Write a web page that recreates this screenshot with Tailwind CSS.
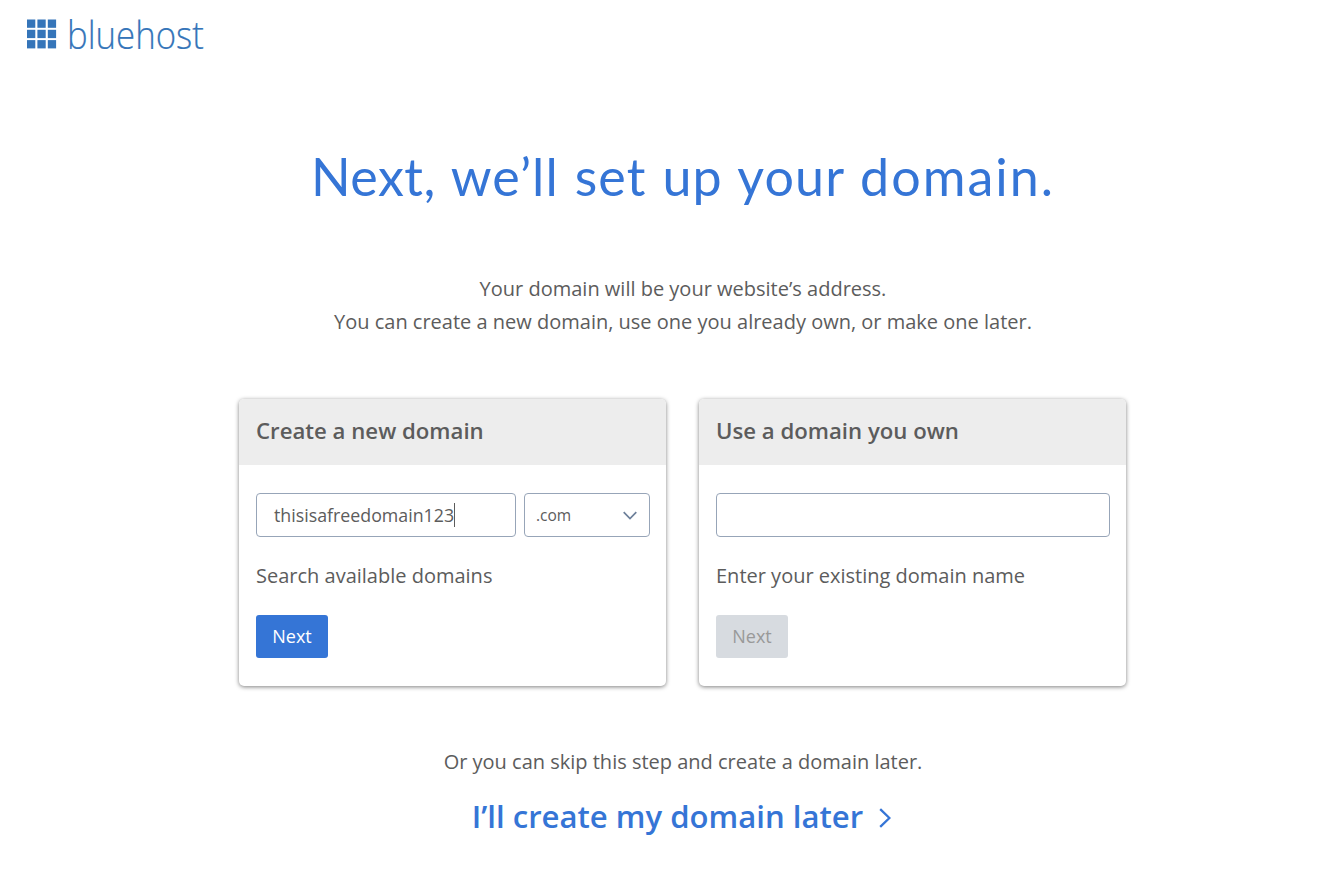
<!DOCTYPE html>
<html lang="en">
<head>
    <meta charset="UTF-8">
    <meta name="viewport" content="width=device-width, initial-scale=1.0">
    <title>Bluehost - Set up your domain</title>
    <script src="https://cdn.jsdelivr.net/npm/@tailwindcss/browser@4"></script>
</head>
<body class="bg-white font-['Open_Sans',sans-serif] text-[#5c5c5c] h-[889px] overflow-hidden">
    <!-- Logo -->
    <header class="flex items-start h-[72px] pl-[27px] pt-[19px]">
        <svg class="w-[30px] h-[30px] fill-[#3575b9]" viewBox="0 0 30 30">
            <rect x="0" y="0.5" width="8.3" height="8.3"/>
            <rect x="10.4" y="0.5" width="8.3" height="8.3"/>
            <rect x="20.8" y="0.5" width="8.3" height="8.3"/>
            <rect x="0" y="10.8" width="8.3" height="8.3"/>
            <rect x="10.4" y="10.8" width="8.3" height="8.3"/>
            <rect x="20.8" y="10.8" width="8.3" height="8.3"/>
            <rect x="0" y="21.1" width="8.3" height="8.3"/>
            <rect x="10.4" y="21.1" width="8.3" height="8.3"/>
            <rect x="20.8" y="21.1" width="8.3" height="8.3"/>
        </svg>
        <span class="ml-[10px] -mt-[7px] origin-left scale-x-[0.915] text-[38px] leading-[44px] font-light text-[#3575b9] [-webkit-text-stroke:0.2px_#3575b9]">bluehost</span>
    </header>

    <main class="w-[888px] ml-[239px] flex flex-col items-center">
        <h1 class="mt-[69px] h-[70px] font-['Lato',sans-serif] text-[52px] leading-[70px] tracking-[1.1px] [word-spacing:1.5px] text-[#3575d6] whitespace-nowrap"><span class="tracking-[0.5px]">Next,</span> we’ll set up your <span class="tracking-[2px]">domain.</span></h1>

        <p class="mt-[61px] text-center text-[20px] leading-[33px] whitespace-nowrap">
            Your domain will be your website’s address.<br>
            You can create a new domain, use one you already own, or make one later.
        </p>

        <div class="mt-[61px] w-[887px] self-start grid grid-cols-2 gap-[33px]">
            <!-- New domain -->
            <section class="h-[287px] rounded-[5px] overflow-hidden bg-white shadow-[0_1px_4px_rgba(0,0,0,0.5)]">
                <h2 class="h-[66px] px-[17px] bg-[#ededed] text-[22.2px] leading-[64px] font-semibold">Create a new domain</h2>
                <div class="pl-[17px] pr-[16.5px] pt-[28px]">
                    <div class="flex gap-2">
                        <div class="w-[260px] h-[44px] flex items-center pl-[17px] border border-[#97a5b8] rounded-[4px] text-[17.8px]">
                            <span>thisisafreedomain123</span><span class="w-px h-6 bg-[#5c5c5c]"></span>
                        </div>
                        <div class="flex-1 h-[44px] flex items-center justify-between pl-[11px] pr-[12px] border border-[#97a5b8] rounded-[4px] text-[15.5px]">
                            <span class="pt-px">.com</span>
                            <svg class="w-[14px] h-[9px] fill-none stroke-[#6e819b] stroke-[1.7]" viewBox="0 0 14 9"><path d="M0.7 1.2 7 7.5 13.3 1.2"/></svg>
                        </div>
                    </div>
                    <p class="mt-[24px] text-[20px] leading-[30px]">Search available domains</p>
                    <button class="mt-[24px] w-[72px] h-[43px] rounded-[3px] bg-[#3575d6] text-white text-[18px]">Next</button>
                </div>
            </section>

            <!-- Existing domain -->
            <section class="h-[287px] rounded-[5px] overflow-hidden bg-white shadow-[0_1px_4px_rgba(0,0,0,0.5)]">
                <h2 class="h-[66px] px-[17px] bg-[#ededed] text-[22.2px] leading-[64px] font-semibold">Use a domain you own</h2>
                <div class="pl-[17px] pr-[16.5px] pt-[28px]">
                    <div class="h-[44px] border border-[#97a5b8] rounded-[4px]"></div>
                    <p class="mt-[24px] text-[20px] leading-[30px]">Enter your existing domain name</p>
                    <button class="mt-[24px] w-[72px] h-[43px] rounded-[3px] bg-[#d7dbe0] text-[#999] text-[18px]">Next</button>
                </div>
            </section>
        </div>

        <p class="mt-[61px] text-[20px] leading-[30px] whitespace-nowrap">Or you can skip this step and create a domain later.</p>
        <a class="mt-[17px] mr-[3px] flex items-center text-[31.1px] leading-[44px] font-semibold text-[#3575d6] whitespace-nowrap">
            <span>I’ll create my domain later</span>
            <svg class="ml-[16px] mt-[3px] w-[12px] h-[20px] fill-none stroke-[#3575d6] stroke-[2.3]" viewBox="0 0 12 20"><path d="M1.2 1.2 10.4 10 1.2 18.8"/></svg>
        </a>
    </main>
</body>
</html>
